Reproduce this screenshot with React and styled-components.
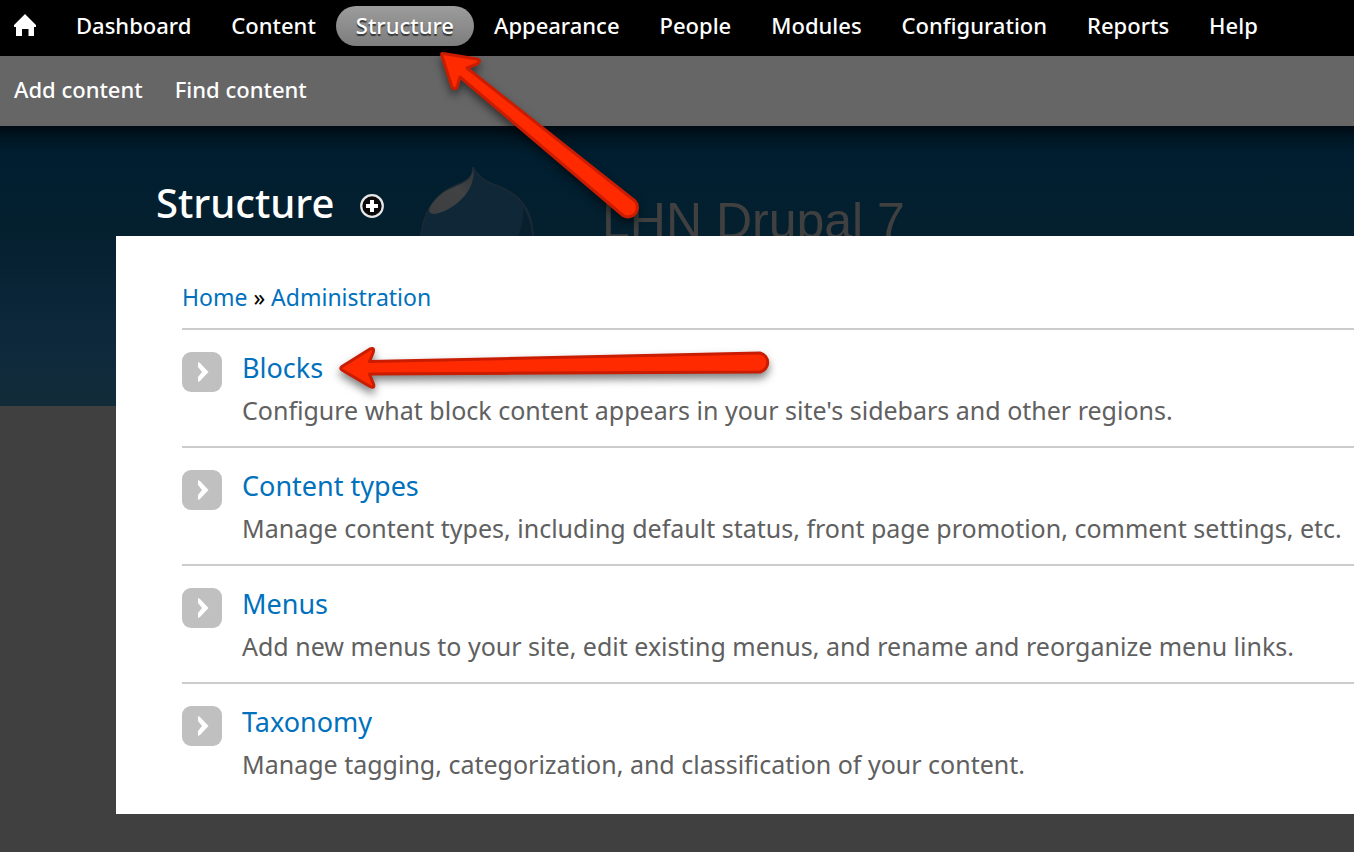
import React from "react";
import styled, { createGlobalStyle } from "styled-components";

const GlobalStyle = createGlobalStyle`
  *, *::before, *::after { box-sizing: border-box; }
  html { background: #404040; }
  body {
    margin: 0;
    background: #404040;
    font-family: "Noto Sans", "Open Sans", sans-serif;
    overflow-x: hidden;
  }
  ul, h1, h2, p { margin: 0; padding: 0; list-style: none; font-weight: inherit; }
  a { text-decoration: none; }
`;

const Page = styled.div`
  position: relative;
  overflow: hidden;
  padding-bottom: 38px;
`;

const Toolbar = styled.nav`
  display: flex;
  align-items: center;
  height: 56px;
  padding: 0 0 4px 14px;
  background: #000;
  white-space: nowrap;
`;

const HomeLink = styled.a`
  display: flex;
  width: 22px;
  margin-right: 20px;
`;

const Menu = styled.ul`
  display: flex;
`;

const MenuLink = styled.a`
  display: block;
  height: 40px;
  padding: 0 20px;
  border-radius: 20px;
  font-size: 22px;
  font-weight: 500;
  line-height: 38px;
  color: #fff;
  background: ${(p) => (p.$active ? "linear-gradient(#9c9c9c, #7d7d7d)" : "none")};
  text-shadow: ${(p) => (p.$active ? "0 2px 1px #333" : "none")};
`;

const Drawer = styled.div`
  display: flex;
  align-items: center;
  gap: 32px;
  height: 70px;
  padding: 0 14px 4px;
  background: #666;
`;

const DrawerLink = styled.a`
  font-size: 22px;
  font-weight: 500;
  line-height: 32px;
  color: #fff;
`;

const Stage = styled.div`
  position: relative;
`;

const SiteHeader = styled.div`
  position: absolute;
  inset: 0 0 auto;
  display: flex;
  gap: 66px;
  height: 280px;
  padding: 40px 0 0 420px;
  background: linear-gradient(#000a12 0, #001623 12px, #001e30 28px, #04202f 100px, #0e293c 220px, #122c39 100%);
`;

const SiteName = styled.div`
  padding-top: 24px;
  font-family: "Liberation Sans", Arial, sans-serif;
  font-size: 50px;
  line-height: 62px;
  color: #404040;
  white-space: nowrap;
`;

const Overlay = styled.main`
  position: relative;
  margin-left: 116px;
`;

const TitleBar = styled.div`
  display: flex;
  align-items: center;
  gap: 26px;
  height: 110px;
  padding: 44px 0 0 40px;
`;

const Title = styled.h1`
  && { font-weight: 500; }
  font-size: 40px;
  line-height: 60px;
  color: #fff;
`;

const IconButton = styled.button`
  display: flex;
  padding: 6px 0 0;
  border: 0;
  background: none;
`;

const Panel = styled.div`
  padding: 44px 0 14px 66px;
  background: #fff;
`;

const Breadcrumb = styled.div`
  height: 48px;
  font-size: 23px;
  line-height: 34px;
  color: #000;
`;

const TextLink = styled.a`
  color: #0071bd;
`;

const Row = styled.li`
  position: relative;
  display: flex;
  gap: 20px;
  height: 118px;
  padding-top: 17px;
  border-top: 2px solid #ccc;
`;

const Tile = styled.span`
  display: flex;
  align-items: center;
  justify-content: center;
  flex: none;
  width: 40px;
  height: 40px;
  margin-top: 5px;
  border-radius: 9px;
  background: #c0c0c0;
`;

const RowText = styled.div`
  white-space: nowrap;
`;

const RowTitle = styled.h2`
  font-size: 27px;
  line-height: 42px;
`;

const RowNote = styled.p`
  font-size: 25px;
  line-height: 42px;
  color: #606060;
`;

const ToolbarArrow = styled.svg`
  position: absolute;
  top: 40px;
  left: 430px;
  pointer-events: none;
  z-index: 2;
`;

const RowArrow = styled.svg`
  position: absolute;
  top: 10px;
  left: 148px;
  pointer-events: none;
`;

const ArrowShape = styled.path`
  fill: #ff2a00;
  stroke: #c91c00;
  stroke-width: 3px;
  stroke-linejoin: round;
  filter: drop-shadow(0 5px 4px rgba(0, 0, 0, 0.5));
`;

const sections = [
  { label: "Blocks", note: "Configure what block content appears in your site's sidebars and other regions.", marked: true },
  { label: "Content types", note: "Manage content types, including default status, front page promotion, comment settings, etc." },
  { label: "Menus", note: "Add new menus to your site, edit existing menus, and rename and reorganize menu links." },
  { label: "Taxonomy", note: "Manage tagging, categorization, and classification of your content." },
];

const menu = ["Dashboard", "Content", "Structure", "Appearance", "People", "Modules", "Configuration", "Reports", "Help"];

function HomeIcon() {
  return (
    <svg width="22" height="24" viewBox="0 0 22 24" aria-hidden="true">
      <path d="M11 0 L22 11 V13 H20 V22 H14.500 V15 H8 V22 H2 V13 H0 V11 Z" fill="#fff" />
    </svg>
  );
}

function DropLogo() {
  return (
    <svg width="116" height="130" viewBox="0 0 116 130" aria-hidden="true">
      <defs>
        <linearGradient id="shine" x1="1" y1="0" x2="0" y2="1">
          <stop offset="0" stopColor="#30363b" />
          <stop offset=".4" stopColor="#414243" />
          <stop offset="1" stopColor="#3c3f41" />
        </linearGradient>
      </defs>
      <path d="M53 1 C56 7 62 13 70 17 C78 20 84 22 90 26 C105 35 113 50 113 72 C113 108 88 128 57 128 C25 128 1 105 1 75 C1 48 15 29 32 21 C46 15 53 13 53 1 Z" fill="#0f2736" stroke="#1b2a35" strokeWidth="1.500" />
      <path d="M53 3 C55 7 53 12 52 17 C47 32 29 46 14 48 C8 48 8 43 12 38 C17 31 24 25 32 22 C46 16 52 13 53 3 Z" fill="url(#shine)" />
      <path d="M103 42 C104 60 99 74 86 89 L113 89 C114 67 109 51 103 42 Z" fill="#081f2d" />
    </svg>
  );
}

function PlusIcon() {
  return (
    <svg width="24" height="24" viewBox="0 0 24 24" aria-hidden="true">
      <circle cx="12" cy="12" r="10.800" fill="#0a0a0a" stroke="#e6e6e6" strokeWidth="2.200" />
      <path d="M12 6 V18 M6 12 H18" stroke="#fff" strokeWidth="4" />
    </svg>
  );
}

function ChevronIcon() {
  return (
    <svg width="40" height="40" viewBox="0 0 40 40" aria-hidden="true">
      <path d="M16 10 L18 11 L26.500 20 L18 29 L16 30 V25 L20 20 L16 15 Z" fill="#fff" />
    </svg>
  );
}

export default function App() {
  return (
    <>
      <GlobalStyle />
      <Page>
        <Toolbar>
          <HomeLink href="#home" aria-label="Home"><HomeIcon /></HomeLink>
          <Menu>
            {menu.map((label) => (
              <li key={label}>
                <MenuLink href="#" $active={label === "Structure"}>{label}</MenuLink>
              </li>
            ))}
          </Menu>
        </Toolbar>
        <Drawer>
          <DrawerLink href="#add">Add content</DrawerLink>
          <DrawerLink href="#find">Find content</DrawerLink>
        </Drawer>
        <ToolbarArrow width="220" height="190" viewBox="430 40 220 190" aria-hidden="true">
          <ArrowShape d="M443 53.500 L477 59 Q482 61 477 64 L467 68 L635 201 A9.500 9.500 0 0 1 623 215.500 L460 77 L457 87 Q455 91 452 87 L442 56 Q441 53 443 53.500 Z" />
        </ToolbarArrow>
        <Stage>
          <SiteHeader aria-hidden="true">
            <DropLogo />
            <SiteName>LHN Drupal 7</SiteName>
          </SiteHeader>
          <Overlay>
            <TitleBar>
              <Title>Structure</Title>
              <IconButton type="button" aria-label="Add to shortcuts"><PlusIcon /></IconButton>
            </TitleBar>
            <Panel>
              <Breadcrumb>
                <TextLink href="#home">Home</TextLink> » <TextLink href="#admin">Administration</TextLink>
              </Breadcrumb>
              <ul>
                {sections.map((s) => (
                  <Row key={s.label}>
                    <Tile><ChevronIcon /></Tile>
                    <RowText>
                      <RowTitle><TextLink href="#">{s.label}</TextLink></RowTitle>
                      <RowNote>{s.note}</RowNote>
                    </RowText>
                    {s.marked && (
                      <RowArrow width="460" height="64" viewBox="330 340 460 64" aria-hidden="true">
                        <ArrowShape d="M342 366.500 L370 349 Q375 347 373 353 L369.500 361.500 L760 353 A9.700 9.700 0 0 1 760 372 L369.500 374 L373.500 384 Q375 389 370 386.500 L342 370 Q339.500 368.200 342 366.500 Z" />
                      </RowArrow>
                    )}
                  </Row>
                ))}
              </ul>
            </Panel>
          </Overlay>
        </Stage>
      </Page>
    </>
  );
}
